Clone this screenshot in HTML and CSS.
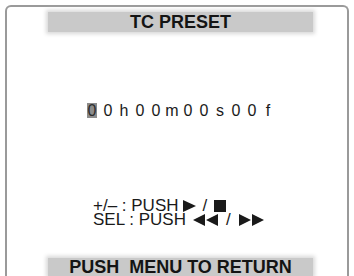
FILE: index.html
```html
<!DOCTYPE html>
<html>
<head>
<meta charset="utf-8">
<link rel="stylesheet" href="styles.css">
</head>
<body>
<div class="frame">
  <div class="bar top-bar">TC PRESET</div>
  <div class="tc">
    <span class="cell"><span class="cursor">0</span></span><span class="cell">0</span><span class="cell">h</span><span class="cell">0</span><span class="cell">0</span><span class="cell">m</span><span class="cell">0</span><span class="cell">0</span><span class="cell">s</span><span class="cell">0</span><span class="cell">0</span><span class="cell">f</span>
  </div>
  <div class="help">
    <div class="line">+/– : PUSH<svg class="ic ic-a" width="13" height="12" viewBox="0 0 13 12"><polygon points="0,0 13,6 0,12" fill="#1a1a1a"/></svg><span class="sl">/</span><svg class="ic" width="12" height="12" viewBox="0 0 12 12"><rect x="0" y="0" width="12" height="12" fill="#1a1a1a"/></svg></div>
    <div class="line">SEL : PUSH<svg class="ic ic-b" width="25" height="12" viewBox="0 0 25 12"><polygon points="12,0 0,6 12,12" fill="#1a1a1a"/><polygon points="25,0 13,6 25,12" fill="#1a1a1a"/></svg><span class="sl">/</span><svg class="ic" width="25" height="12" viewBox="0 0 25 12"><polygon points="0,0 12,6 0,12" fill="#1a1a1a"/><polygon points="13,0 25,6 13,12" fill="#1a1a1a"/></svg></div>
  </div>
  <div class="bar bottom-bar">PUSH&nbsp; MENU TO RETURN</div>
</div>
</body>
</html>
```
FILE: styles.css
```css
html, body {
  margin: 0;
  padding: 0;
  background: #ffffff;
  overflow: hidden;
}
body {
  width: 354px;
  height: 276px;
  font-family: "Liberation Sans", Arial, sans-serif;
  color: #1a1a1a;
}
.frame {
  margin: 5px 5px 0 5px;
  height: 271px;
  border: 2px solid #9a9a9a;
  border-bottom: none;
  border-radius: 6px 6px 0 0;
  box-sizing: border-box;
  display: flex;
  flex-direction: column;
}
.bar {
  margin-left: 41px;
  width: 265px;
  background: #c9c9c9;
  box-shadow: 0 0 4px 2px #d8d8d8;
  font-weight: bold;
  font-size: 18px;
  text-align: center;
  color: #141414;
}
.top-bar {
  margin-top: 5px;
  height: 20px;
  line-height: 20px;
}
.tc {
  margin-top: 71px;
  margin-left: 77px;
  display: flex;
  font-size: 16px;
  height: 15px;
  line-height: 15px;
}
.cell {
  width: 16px;
  display: flex;
  justify-content: center;
}
.cursor {
  display: block;
  width: 10px;
  height: 15px;
  background: #8c8c8c;
  color: #2a2a2a;
  text-align: center;
}
.help {
  margin-top: 81px;
  margin-left: 86px;
  font-size: 17px;
  line-height: 14px;
}
.line {
  white-space: nowrap;
  height: 14px;
}
.ic {
  vertical-align: -1px;
}
.ic-a {
  margin-left: 4px;
}
.ic-b {
  margin-left: 7px;
}
.sl {
  display: inline-block;
  margin: 0 7px;
}
.line + .line .sl {
  margin: 0 8px;
}
.bottom-bar {
  margin-top: auto;
  height: 18px;
  line-height: 18px;
}
```
